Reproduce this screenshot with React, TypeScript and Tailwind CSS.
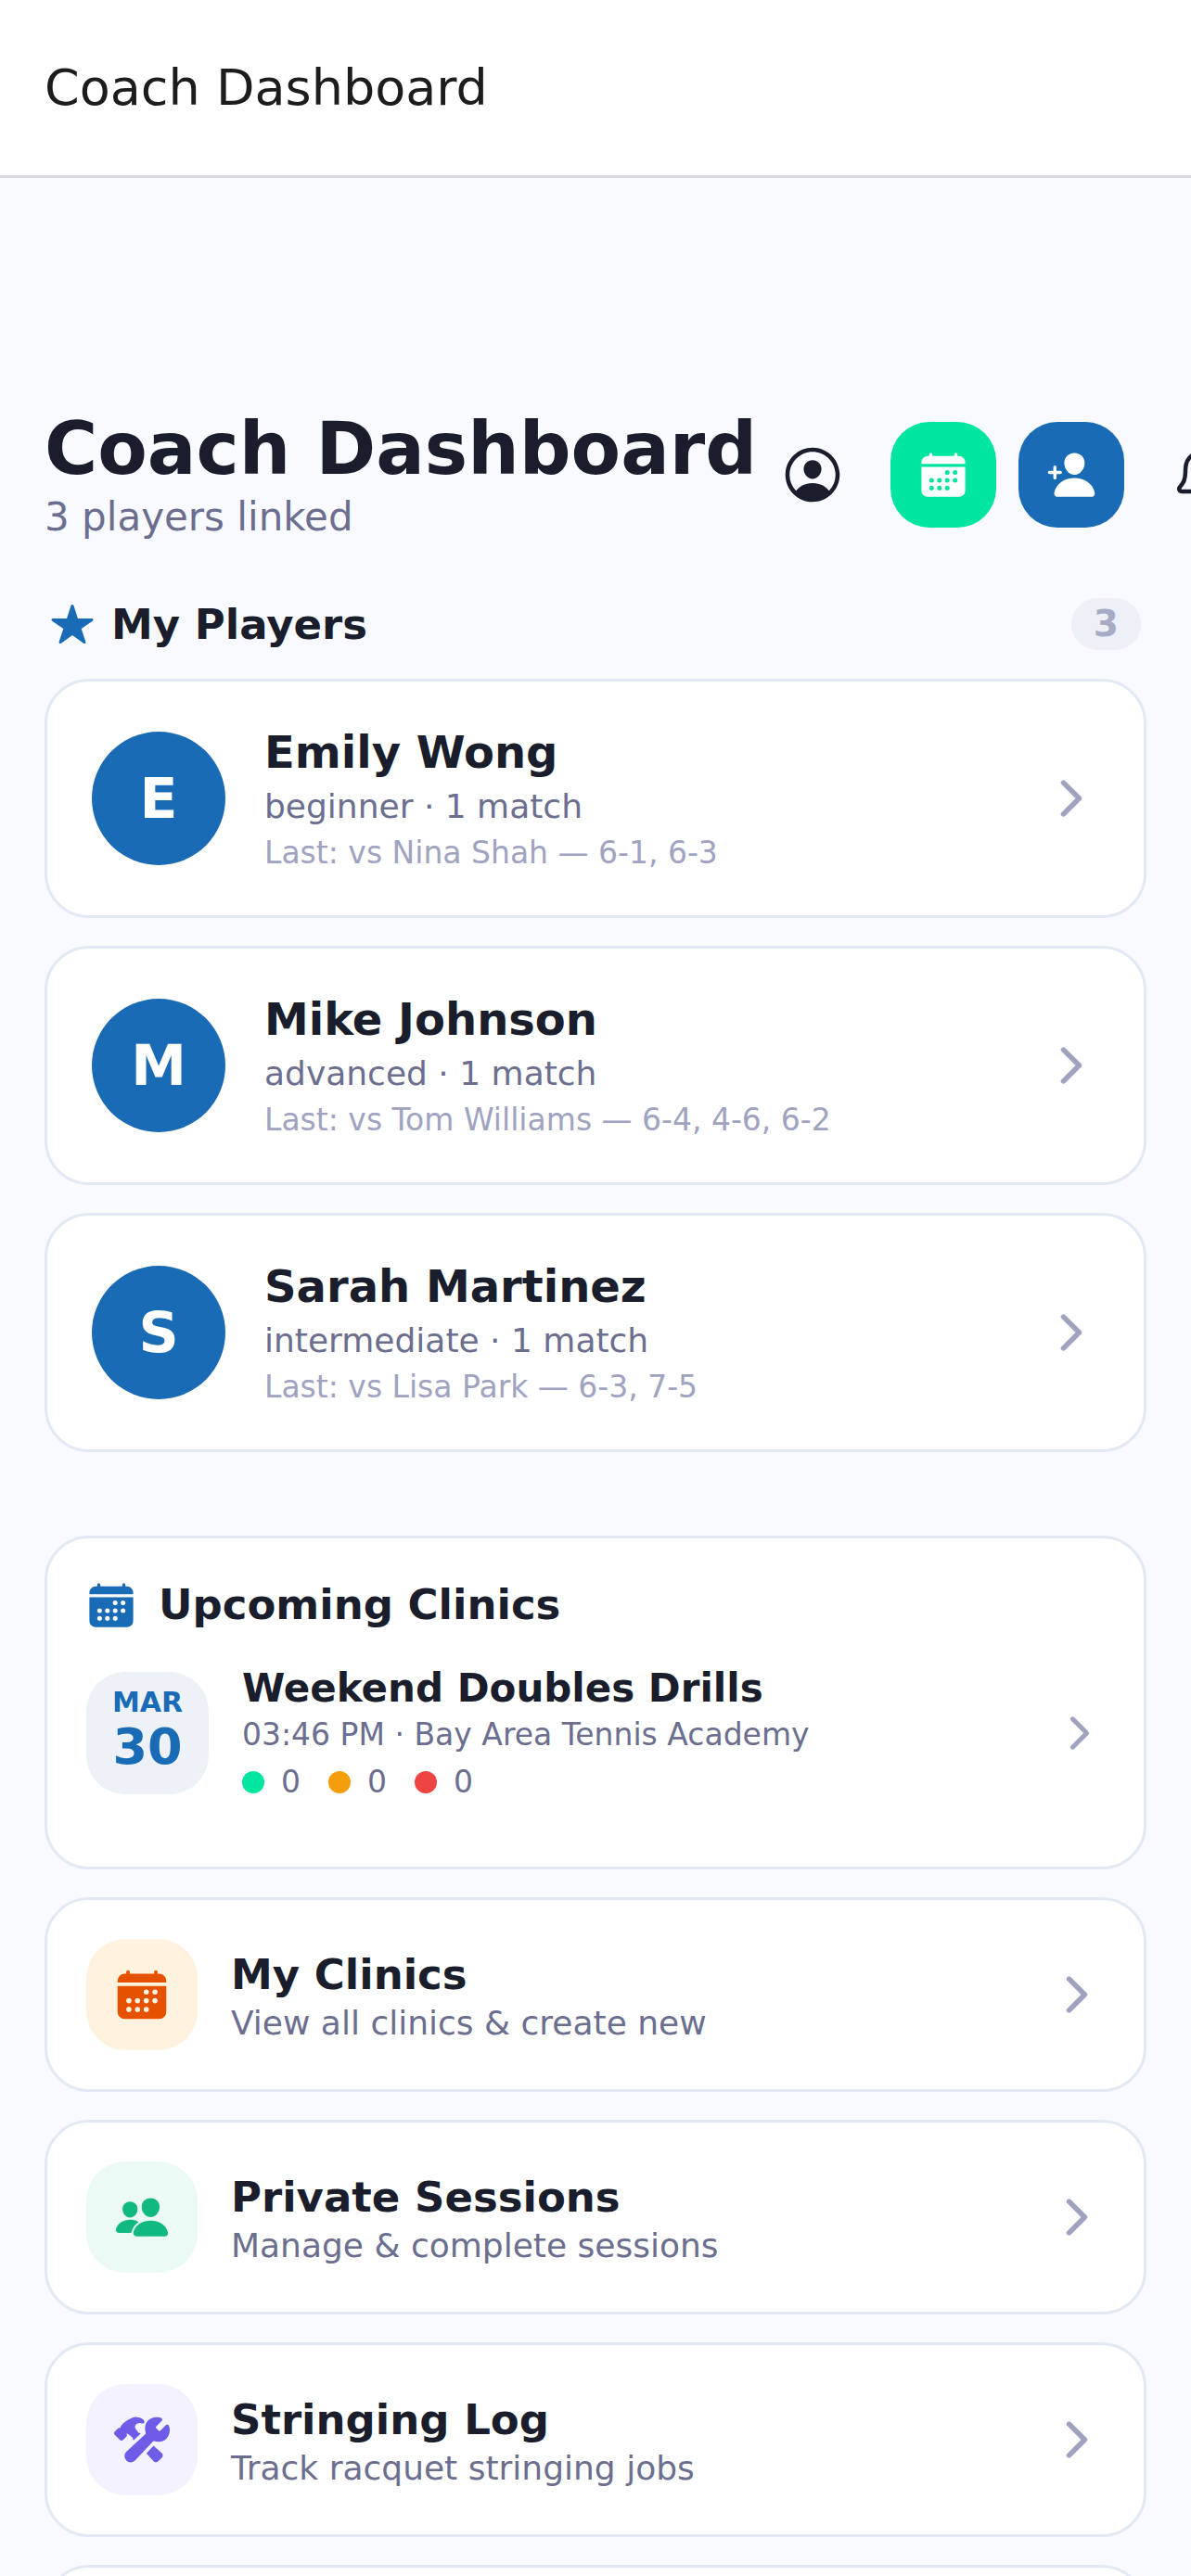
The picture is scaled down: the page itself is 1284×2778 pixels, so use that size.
import React from 'react';
import {
    IoCalendar,
    IoChevronForward,
    IoConstruct,
    IoNotificationsOutline,
    IoPeople,
    IoPersonAdd,
    IoPersonCircleOutline,
    IoStar,
} from 'react-icons/io5';

const players = [
    { initial: 'E', name: 'Emily Wong', level: 'beginner · 1 match', last: 'Last: vs Nina Shah — 6-1, 6-3' },
    { initial: 'M', name: 'Mike Johnson', level: 'advanced · 1 match', last: 'Last: vs Tom Williams — 6-4, 4-6, 6-2' },
    { initial: 'S', name: 'Sarah Martinez', level: 'intermediate · 1 match', last: 'Last: vs Lisa Park — 6-3, 7-5' },
];

const links = [
    { title: 'My Clinics', sub: 'View all clinics & create new', icon: IoCalendar, box: 'bg-[#fff3e0]', tone: 'text-[#e65100]' },
    { title: 'Private Sessions', sub: 'Manage & complete sessions', icon: IoPeople, box: 'bg-[#ecfaf5]', tone: 'text-[#10b981]' },
    { title: 'Stringing Log', sub: 'Track racquet stringing jobs', icon: IoConstruct, box: 'bg-[#f3f2fe]', tone: 'text-[#6c5ce7]' },
];

const counts = ['bg-[#00e5a0]', 'bg-[#f59e0b]', 'bg-[#ef4444]'];

export default function App() {
    return (
        <div className="h-[2778px] w-[1284px] overflow-hidden bg-[#f8faff] font-['DejaVu_Sans',sans-serif] text-[#1a1d2b]">
            <header className="flex h-[192px] items-center border-b-[3px] border-[#d8d8dc] bg-white px-[48px]">
                <h1 className="text-[54px] leading-[60px] text-[#1c1c1e]">Coach Dashboard</h1>
            </header>

            <main className="px-[48px] pt-[250px]">
                <div className="flex items-center whitespace-nowrap">
                    <div className="w-[792px] shrink-0">
                        <h2 className="text-[78px] leading-[84px] font-bold">Coach Dashboard</h2>
                        <p className="mt-[8px] text-[42px] leading-[48px] text-[#6b6e8e]">3 players linked</p>
                    </div>
                    <IoPersonCircleOutline className="h-[72px] w-[72px] shrink-0" />
                    <div className="ml-[48px] flex h-[114px] w-[114px] shrink-0 items-center justify-center rounded-[42px] bg-[#00e5a0] text-white">
                        <IoCalendar className="h-[54px] w-[54px]" />
                    </div>
                    <div className="ml-[24px] flex h-[114px] w-[114px] shrink-0 items-center justify-center rounded-[42px] bg-[#1a6bb5] text-white">
                        <IoPersonAdd className="h-[54px] w-[54px]" />
                    </div>
                    <IoNotificationsOutline className="ml-[48px] h-[72px] w-[72px] shrink-0" />
                </div>

                <div className="mt-[61px] flex h-[60px] items-center justify-between px-[6px]">
                    <div className="flex items-center gap-[18px]">
                        <IoStar className="h-[48px] w-[48px] text-[#1a6bb5]" />
                        <span className="pt-[2px] text-[45px] leading-[54px] font-bold">My Players</span>
                    </div>
                    <span className="rounded-[30px] bg-[#eef0f7] px-[24px] py-[3px] text-[39px] leading-[50px] font-bold text-[#a8abc5]">3</span>
                </div>

                <div className="mt-[29px] flex flex-col gap-[30px]">
                    {players.map((p) => (
                        <div key={p.name} className="flex h-[258px] items-center rounded-[48px] border-[3px] border-[#e2e8f4] bg-white px-[48px]">
                            <div className="flex h-[144px] w-[144px] shrink-0 items-center justify-center rounded-full bg-[#1a6bb5] text-[60px] font-bold text-white">
                                {p.initial}
                            </div>
                            <div className="ml-[42px] min-w-0 flex-1 pt-[3px]">
                                <p className="text-[48px] leading-[60px] font-bold">{p.name}</p>
                                <p className="mt-[5px] text-[36px] leading-[48px] text-[#6b6e8e]">{p.level}</p>
                                <p className="mt-[2px] text-[33px] leading-[48px] text-[#9fa3bf]">{p.last}</p>
                            </div>
                            <IoChevronForward className="h-[60px] w-[60px] shrink-0 text-[#9fa3bf]" />
                        </div>
                    ))}
                </div>

                <div className="mt-[90px] h-[360px] rounded-[48px] border-[3px] border-[#e2e8f4] bg-white px-[42px] pt-[45px]">
                    <div className="flex items-center gap-[24px]">
                        <IoCalendar className="h-[54px] w-[54px] text-[#1a6bb5]" />
                        <span className="text-[45px] leading-[54px] font-bold">Upcoming Clinics</span>
                    </div>
                    <div className="mt-[45px] flex h-[132px] items-center">
                        <div className="flex h-[132px] w-[132px] shrink-0 flex-col items-center justify-center rounded-[42px] bg-[#edf2f9] pb-[6px] font-bold text-[#1a6bb5]">
                            <span className="text-[30px] leading-[36px]">MAR</span>
                            <span className="text-[54px] leading-[60px]">30</span>
                        </div>
                        <div className="ml-[36px] flex-1">
                            <p className="text-[42px] leading-[52px] font-bold">Weekend Doubles Drills</p>
                            <p className="text-[33px] leading-[48px] text-[#6b6e8e]">03:46 PM · Bay Area Tennis Academy</p>
                            <div className="mt-[6px] flex gap-[30px]">
                                {counts.map((dot, i) => (
                                    <div key={i} className="flex items-center gap-[18px]">
                                        <span className={`h-[24px] w-[24px] rounded-full ${dot}`} />
                                        <span className="text-[33px] leading-[42px] text-[#6b6e8e]">0</span>
                                    </div>
                                ))}
                            </div>
                        </div>
                        <IoChevronForward className="h-[54px] w-[54px] shrink-0 text-[#9fa3bf]" />
                    </div>
                </div>

                <div className="mt-[30px] flex flex-col gap-[30px]">
                    {links.map((l) => (
                        <div key={l.title} className="flex h-[210px] shrink-0 items-center rounded-[48px] border-[3px] border-[#e2e8f4] bg-white px-[42px]">
                            <div className={`flex h-[120px] w-[120px] shrink-0 items-center justify-center rounded-[42px] ${l.box} ${l.tone}`}>
                                <l.icon className="h-[60px] w-[60px]" />
                            </div>
                            <div className="ml-[36px] flex-1 pt-[8px]">
                                <p className="text-[45px] leading-[54px] font-bold">{l.title}</p>
                                <p className="text-[36px] leading-[50px] text-[#6b6e8e]">{l.sub}</p>
                            </div>
                            <IoChevronForward className="h-[60px] w-[60px] shrink-0 text-[#9fa3bf]" />
                        </div>
                    ))}
                    <div className="h-[210px] shrink-0 rounded-[48px] border-[3px] border-[#e2e8f4] bg-white" />
                </div>
            </main>
        </div>
    );
}
